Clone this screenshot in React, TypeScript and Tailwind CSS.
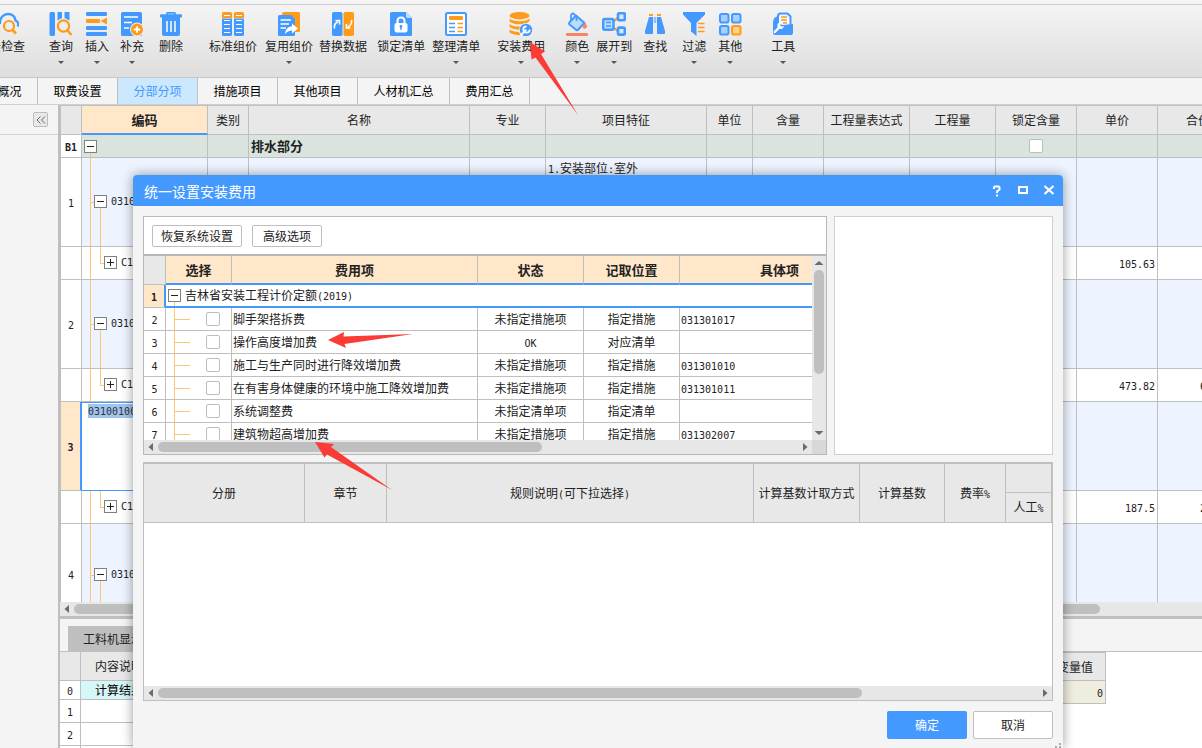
import type { ReactNode } from "react";

const B = "#4499ff";
const O = "#ff9b1a";

function Num({ children }: { children: ReactNode }) {
  return <span className="font-['DejaVu_Sans_Mono',monospace] text-[10px]">{children}</span>;
}

function Icon({ children }: { children: ReactNode }) {
  return (
    <svg viewBox="0 0 24 24" className="h-6 w-6 shrink-0" fill="none" aria-hidden="true">
      {children}
    </svg>
  );
}

const icons: Record<string, ReactNode> = {
  cloud: (
    <Icon>
      <path d="M5 21C1 20 0 17 1 14.500C2 12 4 11.500 5 11C5 5 9 2 13 2C18 2 20 5 20.500 8.500C23 9.500 24 12 22.800 14.500" stroke={B} strokeWidth="2.400" />
      <circle cx="14" cy="14" r="5" stroke={O} strokeWidth="2.200" />
      <path d="M17.500 18L21 21.500" stroke={O} strokeWidth="2.600" />
    </Icon>
  ),
  query: (
    <Icon>
      <rect x="0.500" y="0" width="5.500" height="24" rx="1.500" fill={B} />
      <path d="M8.500 0H12.500Q13 0 13 .5V6L8.500 8.500Z" fill={B} />
      <path d="M15.500 0H20Q20.500 0 20.500 .5V8.500L15.500 6Z" fill={B} />
      <circle cx="14.500" cy="14" r="5.600" stroke={O} strokeWidth="2.200" />
      <path d="M18.500 18.500L22.500 23" stroke={O} strokeWidth="2.600" />
    </Icon>
  ),
  insert: (
    <Icon>
      <rect x="1" y="0" width="21" height="4" rx="1.200" fill={B} />
      <rect x="1" y="7" width="14" height="4" rx="1" fill={O} />
      <path d="M15.500 9L22 5.500V12.500Z" fill={O} />
      <rect x="1" y="14" width="21" height="4" rx="1.200" fill={B} />
      <rect x="1" y="20" width="21" height="4" rx="1.200" fill={B} />
    </Icon>
  ),
  supplement: (
    <Icon>
      <path d="M2.500 0H20.500Q22 0 22 1.500V22.500Q22 24 20.500 24H2.500Q1 24 1 22.500V1.500Q1 0 2.500 0Z" fill={B} />
      <path d="M4 5H18M4 10.500H12M4 16H9" stroke="#fff" strokeWidth="1.500" />
      <circle cx="17" cy="17.500" r="6.900" fill="#f2f2f2" />
      <circle cx="17" cy="17.500" r="6" fill={O} />
      <path d="M17 14.300V20.700M13.800 17.500H20.200" stroke="#fff" strokeWidth="1.800" />
    </Icon>
  ),
  remove: (
    <Icon>
      <path d="M8 3.500V1.500Q8 .8 9 .8H15Q16 .8 16 1.500V3.500" stroke={B} strokeWidth="1.800" />
      <rect x="1" y="2.200" width="22" height="3.200" rx="1" fill={B} />
      <path d="M3 5H21V22Q21 24 19 24H5Q3 24 3 22Z" fill={B} />
      <path d="M8 9V20M12 9V20M16 9V20" stroke="#fff" strokeWidth="1.500" />
    </Icon>
  ),
  standard: (
    <Icon>
      <path d="M1 6V1.500Q1 0 2.500 0H9.500Q11 0 11 1.500V6ZM13 6V1.500Q13 0 14.500 0H21.500Q23 0 23 1.500V6Z" fill={O} />
      <path d="M1 6.500H11V22.500Q11 24 9.500 24H2.500Q1 24 1 22.500ZM13 6.500H23V22.500Q23 24 21.500 24H14.500Q13 24 13 22.500Z" fill={B} />
      <path d="M3 3.500H9M15 3.500H21M3 8.500H9M15 8.500H21M3 12.500H9M15 12.500H21M3 16.500H9M15 16.500H21M3 20.500H9M15 20.500H21" stroke="#fff" strokeWidth="1" />
    </Icon>
  ),
  reuse: (
    <Icon>
      <path d="M7 0H21.500Q23 0 23 1.500V18.500Q23 20 21.500 20H5V2Q5 0 7 0Z" fill={O} />
      <path d="M2.500 3H14L18 7V22.500Q18 24 16.500 24H2.500Q1 24 1 22.500V4.500Q1 3 2.500 3Z" fill={B} />
      <path d="M3.500 8H14M3.500 12H12M3.500 16H9" stroke="#fff" strokeWidth="1.400" />
      <path d="M8 22C8.500 17 11 14.500 15 14.500V11.500L21 16.500L15 21.500V18.500C12 18.500 10 20 8 22Z" fill="#fff" />
    </Icon>
  ),
  replace: (
    <Icon>
      <rect x="1" y="0" width="10.500" height="24" rx="1.800" fill={B} />
      <rect x="12.500" y="0" width="10.500" height="24" rx="1.800" fill={O} />
      <path d="M3.500 16.500Q2.500 12 7 9.500M4.500 8.500H8.500V12.500" stroke="#fff" strokeWidth="1.600" />
      <path d="M20.500 8Q21.500 12.500 17 15M19.500 16H15.500V12" stroke="#fff" strokeWidth="1.600" />
    </Icon>
  ),
  lock: (
    <Icon>
      <path d="M2.500 0H17L23 6V22.500Q23 24 21.500 24H2.500Q1 24 1 22.500V1.500Q1 0 2.500 0Z" fill={B} />
      <path d="M17 0L23 6H18.500Q17 6 17 4.500Z" fill="#bcdcff" />
      <path d="M8.500 12V9Q8.500 5.500 12 5.500Q15.500 5.500 15.500 9V12" stroke="#fff" strokeWidth="2" />
      <rect x="5.500" y="11" width="13" height="9.500" rx="2" fill="#fff" />
      <circle cx="12" cy="14.500" r="1.400" fill={B} />
      <path d="M12 14V18" stroke={B} strokeWidth="1.400" />
    </Icon>
  ),
  arrange: (
    <Icon>
      <rect x="2" y="1" width="20" height="22" rx="1.500" fill="#fff" stroke={B} strokeWidth="2" />
      <rect x="5" y="4" width="14" height="4" rx="1" fill={O} />
      <path d="M5 11.500H11M5 15.500H11M5 19.500H11" stroke={B} strokeWidth="1.500" />
      <path d="M13.500 11.500H19M13.500 15.500H19M13.500 19.500H19" stroke={O} strokeWidth="1.500" />
    </Icon>
  ),
  install: (
    <Icon>
      <ellipse cx="10.500" cy="3.700" rx="10" ry="3.700" fill={O} />
      <path d="M.5 6.500Q3.500 9.200 10.500 9.200T20.500 6.500V9.200Q17.500 12.300 10.500 12.300T.5 9.200ZM.5 12Q3.500 14.600 10.500 14.600L12 14.500L10.500 17.700Q3.500 17.500 .5 14.800ZM.5 17.500Q3.500 19.800 10 19.900L11.500 23.300Q3.500 23 .5 20.300Z" fill={O} />
      <circle cx="17" cy="18" r="7" fill="#eee" />
      <circle cx="17" cy="18" r="6.200" fill={B} />
      <path d="M12.500 22.500L16.800 18.200" stroke="#fff" strokeWidth="1.800" strokeLinecap="round" />
      <path d="M17.500 14.300A3.200 3.200 0 1 0 20.700 17.500" stroke="#fff" strokeWidth="1.800" />
    </Icon>
  ),
  color: (
    <Icon>
      <path d="M11 3.500L19.500 11L13 17.700Q12 18.700 11 17.700L4.500 12.500Q3.500 11.500 4.300 10.500Z" fill="#b9dcff" stroke={B} strokeWidth="2" strokeLinejoin="round" />
      <path d="M6 9V4Q6 1.300 8.500 1.500L11.500 4.500V9" stroke={B} strokeWidth="1.800" />
      <path d="M20 11.500Q22.800 15.500 20 16T20 11.500Z" fill="#f98560" stroke="#f98560" strokeWidth="1.200" />
      <rect x="1" y="21" width="22" height="3" rx="1.200" fill="#f98560" />
    </Icon>
  ),
  expand: (
    <Icon>
      <path d="M11 10L16 5.500M11 15L16 19.500" stroke={O} strokeWidth="2" />
      <rect x="1.200" y="7" width="10.300" height="10.800" rx="1.500" fill="#b9dcff" stroke={B} strokeWidth="2.400" />
      <path d="M4 10.500H9M4 14H9" stroke={B} strokeWidth="1.400" />
      <rect x="16" y="1.200" width="6.800" height="7" rx="1.200" fill="#d6eaff" stroke={B} strokeWidth="2.600" />
      <rect x="16" y="15.600" width="6.800" height="7" rx="1.200" fill="#d6eaff" stroke={B} strokeWidth="2.600" />
    </Icon>
  ),
  find: (
    <Icon>
      <rect x="6" y="2" width="4" height="2" rx=".5" fill={O} />
      <rect x="14" y="2" width="4" height="2" rx=".5" fill={O} />
      <path d="M6 5H10V12V21Q10 22 9 22H3Q2 22 2 21V19ZM18 5H14V12V21Q14 22 15 22H21Q22 22 22 21V19Z" fill={B} />
      <path d="M11.300 5V11M12.700 5V11" stroke={B} strokeWidth=".7" />
    </Icon>
  ),
  filter: (
    <Icon>
      <path d="M1 0H23V2.500L14.500 11V24L9 19.500V11L1 2.500Z" fill={B} />
      <path d="M16 11.500H22.500M16 15.500H22.500M16 19.500H22.500" stroke={O} strokeWidth="1.600" />
    </Icon>
  ),
  other: (
    <Icon>
      <rect x="2" y="2" width="8.500" height="8.500" rx="1.800" fill="#a5d0ff" stroke={B} strokeWidth="2" />
      <rect x="14" y="2" width="8.500" height="8.500" rx="1.800" fill="#a5d0ff" stroke={B} strokeWidth="2" />
      <rect x="2" y="14" width="8.500" height="8.500" rx="1.800" fill="#a5d0ff" stroke={B} strokeWidth="2" />
      <rect x="14" y="14" width="8.500" height="8.500" rx="1.800" fill="#ffd08a" stroke={O} strokeWidth="2" />
    </Icon>
  ),
  tool: (
    <Icon>
      <path d="M2 11Q2 4.500 7.500 4L9 11V22H4Q2 22 2 20Z" fill={B} />
      <path d="M7 14V4Q7 1.500 9.500 1.500H16.500L19.500 4.500V14Z" fill="#f2f8ff" stroke={B} strokeWidth="2" />
      <path d="M10 5H16M10 8H16M12 11H16" stroke={O} strokeWidth="1.400" />
      <path d="M2 12H8L12 13L22 12V21Q22 23 20 23H4Q2 23 2 21Z" fill={B} />
      <path d="M3.800 20L8 15.500" stroke="#fff" strokeWidth="2.400" strokeLinecap="round" />
      <path d="M9.700 10.500A3.200 3.200 0 1 0 12.800 14L10.500 14.500L9 13Z" fill="#fff" />
    </Icon>
  ),
};

const tools: { label: string; icon: string; gap: string; menu?: boolean }[] = [
  { label: "云检查", icon: "cloud", gap: "-ml-[11px]" },
  { label: "查询", icon: "query", gap: "ml-6", menu: true },
  { label: "插入", icon: "insert", gap: "ml-3", menu: true },
  { label: "补充", icon: "supplement", gap: "ml-[11px]", menu: true },
  { label: "删除", icon: "remove", gap: "ml-[15px]" },
  { label: "标准组价", icon: "standard", gap: "ml-[26px]" },
  { label: "复用组价", icon: "reuse", gap: "ml-2", menu: true },
  { label: "替换数据", icon: "replace", gap: "ml-1.5" },
  { label: "锁定清单", icon: "lock", gap: "ml-2.5" },
  { label: "整理清单", icon: "arrange", gap: "ml-[7px]", menu: true },
  { label: "安装费用", icon: "install", gap: "ml-[17px]", menu: true },
  { label: "颜色", icon: "color", gap: "ml-5", menu: true },
  { label: "展开到", icon: "expand", gap: "ml-[7px]", menu: true },
  { label: "查找", icon: "find", gap: "ml-[11px]" },
  { label: "过滤", icon: "filter", gap: "ml-[15px]", menu: true },
  { label: "其他", icon: "other", gap: "ml-3", menu: true },
  { label: "工具", icon: "tool", gap: "ml-[29px]", menu: true },
];

const tabs = ["工程概况", "取费设置", "分部分项", "措施项目", "其他项目", "人材机汇总", "费用汇总"];

function Toolbar() {
  return (
    <header className="shrink-0 border-b border-[#c8c8c8] bg-[#f4f4f4] pt-1">
      <div className="flex h-[73px] items-start overflow-hidden border-t border-[#cccccc] bg-gradient-to-b from-[#f4f4f4] to-[#dedede] pt-[7px]">
        {tools.map((t) => (
          <button key={t.label} type="button" className={`flex shrink-0 flex-col items-center ${t.gap}`}>
            {icons[t.icon]}
            <span className="mt-0.5 leading-4 whitespace-nowrap">{t.label}</span>
            {t.menu && (
              <svg viewBox="0 0 6 3" className="mt-[7px] h-[3px] w-1.5" aria-hidden="true">
                <path d="M0 0H6L3 3Z" fill="#555" />
              </svg>
            )}
          </button>
        ))}
      </div>
    </header>
  );
}

function Arrow({ dir }: { dir: "left" | "right" | "up" | "down" }) {
  const d = {
    left: "M9 3V11L4.500 7Z",
    right: "M5 3V11L9.500 7Z",
    up: "M2.500 9H11.500L7 5Z",
    down: "M2.500 5H11.500L7 9Z",
  }[dir];
  return (
    <button type="button" aria-label={dir} className="h-3.5 w-3.5 shrink-0">
      <svg viewBox="0 0 14 14" className="h-3.5 w-3.5">
        <path d={d} fill="#6a6a72" />
      </svg>
    </button>
  );
}

function HScroll({ thumb, end = true }: { thumb: string; end?: boolean }) {
  return (
    <div className="flex h-3.5 min-w-0 flex-1 shrink-0 items-center bg-[#e7e7e7]">
      <Arrow dir="left" />
      <div className="flex-1">
        <div className={`h-2.5 rounded-full bg-[#bfbfbf] ${thumb}`} />
      </div>
      {end && <Arrow dir="right" />}
    </div>
  );
}

function Toggle({ open }: { open: boolean }) {
  return (
    <button
      type="button"
      aria-label={open ? "折叠" : "展开"}
      className="relative z-10 flex h-[13px] w-[13px] shrink-0 items-center justify-center border border-[#808080] bg-white"
    >
      <svg viewBox="0 0 9 9" className="h-[9px] w-[9px]" shapeRendering="crispEdges">
        <path d={open ? "M1 4.500H8" : "M1 4.500H8M4.500 1V8"} stroke="#222" strokeWidth="1" />
      </svg>
    </button>
  );
}

function Check({ label }: { label: string }) {
  return (
    <input
      type="checkbox"
      aria-label={label}
      className="block h-3.5 w-3.5 appearance-none rounded-xs border border-[#bdbdbd] bg-white"
    />
  );
}

const line = "absolute bg-[#ffc672]";

const mainCols: [string, string][] = [
  ["", "w-[21px]"],
  ["编码", "w-[126px]"],
  ["类别", "w-[41px]"],
  ["名称", "w-[221px]"],
  ["专业", "w-[76px]"],
  ["项目特征", "w-[161px]"],
  ["单位", "w-[46px]"],
  ["含量", "w-[71px]"],
  ["工程量表达式", "w-[86px]"],
  ["工程量", "w-[86px]"],
  ["锁定含量", "w-[81px]"],
  ["单价", "w-[81px]"],
  ["合价", "w-[81px]"],
];

type MainRow = {
  no: string;
  kind: "section" | "item" | "sub" | "edit";
  code: string;
  name?: string;
  feature?: ReactNode;
  price?: string;
  total?: string;
  height: string;
};

const mainRows: MainRow[] = [
  { no: "B1", kind: "section", code: "", name: "排水部分", height: "h-[23px]" },
  { no: "1", kind: "item", code: "0310", feature: <><Num>1.</Num>安装部位<Num>:</Num>室外</>, height: "h-[89px]" },
  { no: "", kind: "sub", code: "C1", price: "105.63", height: "h-[33px]" },
  { no: "2", kind: "item", code: "0310", height: "h-[89px]" },
  { no: "", kind: "sub", code: "C1", price: "473.82", total: "663.35", height: "h-[33px]" },
  { no: "3", kind: "edit", code: "03100100", height: "h-[89px]" },
  { no: "", kind: "sub", code: "C1", price: "187.5", total: "243.75", height: "h-[33px]" },
  { no: "4", kind: "item", code: "0310", height: "h-[102px]" },
];

function CodeCell({ row }: { row: MainRow }) {
  if (row.kind === "section")
    return (
      <td className="relative border-r border-b border-[#bfbfbf] pl-0.5">
        <span className={`${line} top-1/2 bottom-0 left-2 w-px`} />
        <Toggle open />
      </td>
    );
  if (row.kind === "edit")
    return (
      <td className="border-y border-[#4499ff] bg-white p-0 pt-px pl-1.5 align-top">
        <input
          aria-label="编码"
          defaultValue={row.code}
          className="block h-3.5 w-[54px] bg-[#a0c4f0] font-['DejaVu_Sans_Mono',monospace] text-[10px] text-[#333] outline-none"
        />
      </td>
    );
  const item = row.kind === "item";
  return (
    <td className="relative border-r border-b border-[#bfbfbf] p-0">
      <span className={`${line} inset-y-0 left-2 w-px`} />
      {item ? (
        <>
          <span className={`${line} top-1/2 left-2 h-px w-1`} />
          <span className={`${line} top-1/2 bottom-0 left-[18px] w-px`} />
        </>
      ) : (
        <>
          <span className={`${line} top-0 bottom-1/2 left-[18px] w-px`} />
          <span className={`${line} top-1/2 left-[18px] h-px w-1`} />
        </>
      )}
      <div className={`flex items-center gap-1 ${item ? "pl-3" : "pl-[22px]"}`}>
        <Toggle open={item} />
        <Num>{row.code}</Num>
      </div>
    </td>
  );
}

function MainTable() {
  return (
    <table className="w-full min-w-[1178px] table-fixed border-separate border-spacing-0">
      <thead>
        <tr className="h-[29px]">
          {mainCols.map(([name, w]) => (
            <th
              key={name}
              scope="col"
              className={`${w} border-r border-[#bfbfbf] p-0 ${
                name === "编码"
                  ? "border-b-2 border-b-[#4499ff] bg-[#ffe7c9] text-[13px] font-bold"
                  : "border-b bg-[#e8e8e8] font-normal"
              }`}
            >
              {name}
            </th>
          ))}
        </tr>
      </thead>
      <tbody>
        {mainRows.map((r, i) => {
          const bg = r.kind === "section" ? "bg-[#dae4de]" : r.kind === "sub" ? "bg-white" : "bg-[#edf4ff]";
          const cell = "border-r border-b border-[#bfbfbf] p-0";
          return (
            <tr key={i} className={`${r.height} ${bg}`}>
              <th
                scope="row"
                className={`border-b border-b-[#bfbfbf] p-0 text-center ${
                  r.kind === "edit"
                    ? "border-r-2 border-r-[#4499ff] bg-[#ffe7c9] font-bold"
                    : r.kind === "section"
                      ? "border-r border-r-[#bfbfbf] bg-white font-bold"
                      : "border-r border-r-[#bfbfbf] bg-white font-normal"
                }`}
              >
                <Num>{r.no}</Num>
              </th>
              <CodeCell row={r} />
              <td className={cell} />
              <td className={`${cell} pl-0.5 text-[13px] font-bold`}>{r.name}</td>
              <td className={cell} />
              <td className={`${cell} pt-0.5 pl-0.5 align-top`}>{r.feature}</td>
              <td className={cell} />
              <td className={cell} />
              <td className={cell} />
              <td className={cell} />
              <td className={cell}>
                {r.kind === "section" && (
                  <div className="flex justify-center">
                    <Check label="锁定含量" />
                  </div>
                )}
              </td>
              <td className={`${cell} pr-0.5 text-right`}>
                <Num>{r.price}</Num>
              </td>
              <td className={`${cell} pr-0.5 text-right`}>
                <Num>{r.total}</Num>
              </td>
            </tr>
          );
        })}
      </tbody>
    </table>
  );
}

function BottomPane() {
  const c = "border-r border-b border-[#bfbfbf] p-0";
  return (
    <section className="flex h-[132px] shrink-0 flex-col overflow-hidden border-t-[3px] border-[#bfbfbf] bg-[#f4f4f4]">
      <div className="flex h-[33px] shrink-0 items-end border-b border-[#bfbfbf] pl-2">
        <button type="button" className="h-[25px] bg-[#bfbfbf] px-[15px]">
          工料机显示
        </button>
      </div>
      <div className="flex flex-1 items-start bg-white">
        <table className="w-[523px] shrink-0 table-fixed border-separate border-spacing-0">
          <thead>
            <tr className="h-[29px] bg-[#e8e8e8]">
              <th className={`${c} w-[21px]`} />
              <th className={`${c} pl-3.5 text-left font-normal`}>内容说明</th>
            </tr>
          </thead>
          <tbody>
            <tr className="h-[19px]">
              <th className={`${c} font-normal`}><Num>0</Num></th>
              <td className={`${c} bg-[#d6f7f7] pl-3.5 text-black`}>
                <div className="h-[18px] leading-[18px]">计算结果</div>
              </td>
            </tr>
            {["1", "2", "3"].map((n) => (
              <tr key={n} className="h-[23px]">
                <th className={`${c} font-normal`}><Num>{n}</Num></th>
                <td className={c} />
              </tr>
            ))}
          </tbody>
        </table>
        <table className="w-[523px] shrink-0 table-fixed border-separate border-spacing-0">
          <thead>
            <tr className="h-[29px] bg-[#e8e8e8]">
              <th className={c} />
              <th className={`${c} w-[61px] border-t font-normal`}>变量值</th>
            </tr>
          </thead>
          <tbody>
            <tr className="h-[23px] bg-[#efedde]">
              <td className={c} />
              <td className={`${c} pr-0.5 text-right`}><Num>0</Num></td>
            </tr>
          </tbody>
        </table>
      </div>
    </section>
  );
}

const feeRows = [
  ["2", "脚手架搭拆费", "未指定措施项", "指定措施", "031301017"],
  ["3", "操作高度增加费", "OK", "对应清单", ""],
  ["4", "施工与生产同时进行降效增加费", "未指定措施项", "指定措施", "031301010"],
  ["5", "在有害身体健康的环境中施工降效增加费", "未指定措施项", "指定措施", "031301011"],
  ["6", "系统调整费", "未指定清单项", "指定清单", ""],
  ["7", "建筑物超高增加费", "未指定措施项", "指定措施", "031302007"],
];

function FeeTable() {
  const h = "border-r border-b-2 border-r-[#bfbfbf] border-b-[#4499ff] bg-[#ffe7c9] p-0 text-[13px] font-bold";
  const c = "border-r border-b border-[#bfbfbf] p-0";
  return (
    <table className="w-full min-w-[736px] table-fixed border-separate border-spacing-0">
      <thead>
        <tr className="h-[29px]">
          <th className={`${c} w-[22px] bg-[#e8e8e8]`} />
          <th className={`${h} w-[66px]`}>选择</th>
          <th className={`${h} w-[246px]`}>费用项</th>
          <th className={`${h} w-[106px]`}>状态</th>
          <th className={`${h} w-[96px]`}>记取位置</th>
          <th className={`${h} w-[200px]`}>具体项</th>
        </tr>
      </thead>
      <tbody>
        <tr className="h-[23px]">
          <th className="border-r-2 border-b border-r-[#4499ff] border-b-[#bfbfbf] bg-[#ffe7c9] p-0 font-bold">
            <Num>1</Num>
          </th>
          <td colSpan={5} className="relative border-b-2 border-[#4499ff] p-0">
            <span className={`${line} top-1/2 bottom-0 left-2 w-px`} />
            <div className="flex items-center gap-1 pl-0.5">
              <Toggle open />
              <span className="leading-4">
                吉林省安装工程计价定额<Num>(2019)</Num>
              </span>
            </div>
          </td>
        </tr>
        {feeRows.map(([no, name, status, place, item]) => (
          <tr key={no} className="h-[23px]">
            <th scope="row" className={`${c} font-normal`}><Num>{no}</Num></th>
            <td className={`${c} relative pl-10`}>
              <span className={`${line} inset-y-0 left-2 w-px`} />
              <span className={`${line} top-1/2 left-2 h-px w-4`} />
              <Check label={name} />
            </td>
            <td className={`${c} pl-px whitespace-nowrap`}>{name}</td>
            <td className={`${c} text-center`}>{status === "OK" ? <Num>{status}</Num> : status}</td>
            <td className={`${c} text-center`}>{place}</td>
            <td className={`${c} pl-px`}><Num>{item}</Num></td>
          </tr>
        ))}
      </tbody>
    </table>
  );
}

function RuleTable() {
  const h = "border-r border-b border-[#bfbfbf] bg-[#e8e8e8] p-0 font-normal whitespace-nowrap";
  return (
    <table className="w-full table-fixed border-separate border-spacing-0">
      <thead>
        <tr className="h-[29px]">
          <th rowSpan={2} className={`${h} w-[161px]`}>分册</th>
          <th rowSpan={2} className={`${h} w-[82px]`}>章节</th>
          <th rowSpan={2} className={h}>规则说明<Num>(</Num>可下拉选择<Num>)</Num></th>
          <th rowSpan={2} className={`${h} w-[106px]`}>计算基数计取方式</th>
          <th rowSpan={2} className={`${h} w-[85px]`}>计算基数</th>
          <th rowSpan={2} className={`${h} w-[61px]`}>费率<Num>%</Num></th>
          <th className={`${h} w-[46px]`} />
        </tr>
        <tr className="h-[30px]">
          <th className={h}>人工<Num>%</Num></th>
        </tr>
      </thead>
    </table>
  );
}

function FeeDialog() {
  const small = "h-[22px] rounded-xs border border-[#bfbfbf] bg-white px-2";
  return (
    <div
      role="dialog"
      aria-label="统一设置安装费用"
      className="absolute top-[175px] right-[139px] bottom-0 left-[133px] flex flex-col overflow-hidden rounded-t bg-[#f4f4f4]"
    >
      <div className="flex h-[31px] shrink-0 items-center bg-[#4499ff] pr-[7px] pl-[11px] text-white">
        <h1 className="flex-1 text-sm">统一设置安装费用</h1>
        <div className="flex items-center gap-3">
          <button type="button" aria-label="帮助" className="h-3.5 w-3.5">
            <svg viewBox="0 0 14 14" fill="none" stroke="#fff" strokeWidth="2">
              <path d="M4 5V3.500Q4 2.500 5 2.500H8.500Q9.500 2.500 9.500 3.500V5.500L7 7.500V9M7 10.500V12.500" />
            </svg>
          </button>
          <button type="button" aria-label="最大化" className="h-3.5 w-3.5">
            <svg viewBox="0 0 14 14" fill="none" stroke="#fff" strokeWidth="2">
              <path d="M3 3H11V9H3Z" />
            </svg>
          </button>
          <button type="button" aria-label="关闭" className="h-3.5 w-3.5">
            <svg viewBox="0 0 14 14" fill="none" stroke="#fff" strokeWidth="2.200">
              <path d="M2.500 2L11.500 10M11.500 2L2.500 10" />
            </svg>
          </button>
        </div>
      </div>

      <div className="flex min-h-0 flex-1 flex-col gap-[7px] px-2.5 pt-2.5">
        <div className="flex h-[239px] shrink-0 gap-[7px]">
          <section className="flex min-w-0 flex-1 flex-col border border-[#b8b8b8] bg-white">
            <div className="flex h-[37px] shrink-0 items-center gap-2.5 pl-2">
              <button type="button" className={small}>恢复系统设置</button>
              <button type="button" className={`${small} px-2.5`}>高级选项</button>
            </div>
            <div className="flex min-h-0 flex-1 border-t-2 border-[#b8b8b8]">
              <div className="min-w-0 flex-1 overflow-hidden">
                <FeeTable />
              </div>
              <div className="flex w-3.5 shrink-0 flex-col bg-[#e7e7e7]">
                <Arrow dir="up" />
                <div className="flex flex-1 justify-center">
                  <div className="h-2/3 w-2.5 rounded-full bg-[#bfbfbf]" />
                </div>
                <Arrow dir="down" />
              </div>
            </div>
            <div className="flex h-3.5 shrink-0">
              <HScroll thumb="w-3/5" />
              <div className="w-3.5 bg-[#d8d8d8]" />
            </div>
          </section>
          <aside className="w-[219px] shrink-0 border border-[#cfcfcf] bg-white" />
        </div>

        <section className="flex min-h-0 flex-1 flex-col border border-t-2 border-[#bfbfbf] bg-white">
          <div className="min-h-0 flex-1 overflow-hidden">
            <RuleTable />
          </div>
          <div className="flex h-3.5 shrink-0">
            <HScroll thumb="w-4/5" />
          </div>
        </section>
      </div>

      <div className="relative flex shrink-0 justify-end gap-1.5 px-2.5 pt-2.5 pb-[9px]">
        <button type="button" className="h-7 w-20 rounded-xs bg-[#4499ff] text-white">确定</button>
        <button type="button" className="h-7 w-20 rounded-xs border border-[#bfbfbf] bg-white">取消</button>
        <svg viewBox="0 0 8 8" className="absolute right-0 bottom-0 h-2 w-2" aria-hidden="true">
          <path d="M4 3H6V5H4ZM0 6H2V8H0ZM4 6H6V8H4Z" fill="#aaa" />
        </svg>
      </div>
    </div>
  );
}

function Pointers() {
  return (
    <svg width="640" height="520" className="pointer-events-none absolute top-0 left-0" fill="#fb3b36" aria-hidden="true">
      <path d="M530 42L545 51.500L541 54L578 115L535.500 57.500L531.500 59.500Z" />
      <path d="M328 340L344 332L343.500 336.500L413 334L344.500 344L346 348Z" />
      <path d="M315 442L334 444L331 447L392 490L327 454.500L324.500 457.500Z" />
    </svg>
  );
}

export default function App() {
  return (
    <div className="relative flex h-screen flex-col overflow-hidden bg-[#f4f4f4] font-['Noto_Sans_CJK_SC','Liberation_Sans',sans-serif] text-xs text-[#222]">
      <Toolbar />
      <nav className="flex h-[27px] shrink-0 overflow-hidden border-b border-[#cfcfcf]">
        {tabs.map((t, i) => (
          <button
            key={t}
            type="button"
            className={`shrink-0 border-r border-[#bfbfbf] px-[15px] ${i === 0 ? "-ml-[42px] w-20" : ""} ${
              t === "人材机汇总" ? "w-[92px]" : "w-20"
            } ${t === "分部分项" ? "bg-[#cce8ff] text-[#4499ff]" : "text-black"}`}
          >
            {t}
          </button>
        ))}
      </nav>

      <div className="flex min-h-0 flex-1">
        <aside className="w-[58px] shrink-0">
          <div className="flex h-[30px] items-center justify-end border-b border-[#d4d4d4] pr-2.5">
            <button
              type="button"
              aria-label="收起"
              className="flex h-[15px] w-[15px] items-center justify-center rounded-xs border border-[#bdbdbd] bg-[#e8e8e8]"
            >
              <svg viewBox="0 0 10 8" className="h-2 w-2.5" fill="none" stroke="#666">
                <path d="M4.500 .5L1 4L4.500 7.500M9 .5L5.500 4L9 7.500" />
              </svg>
            </button>
          </div>
        </aside>
        <main className="flex min-w-0 flex-1 flex-col border-l-2 border-[#bfbfbf]">
          <div className="min-h-0 flex-1 overflow-hidden border-t border-l border-[#bfbfbf] bg-white">
            <MainTable />
          </div>
          <div className="flex h-3.5 shrink-0">
            <HScroll thumb="w-[91%]" end={false} />
          </div>
          <BottomPane />
        </main>
      </div>

      <div className="pointer-events-none absolute top-[175px] right-[139px] bottom-0 left-[133px] rounded-t shadow-[0_0_12px_rgba(0,0,0,0.4)]" />
      <FeeDialog />
      <Pointers />
    </div>
  );
}
